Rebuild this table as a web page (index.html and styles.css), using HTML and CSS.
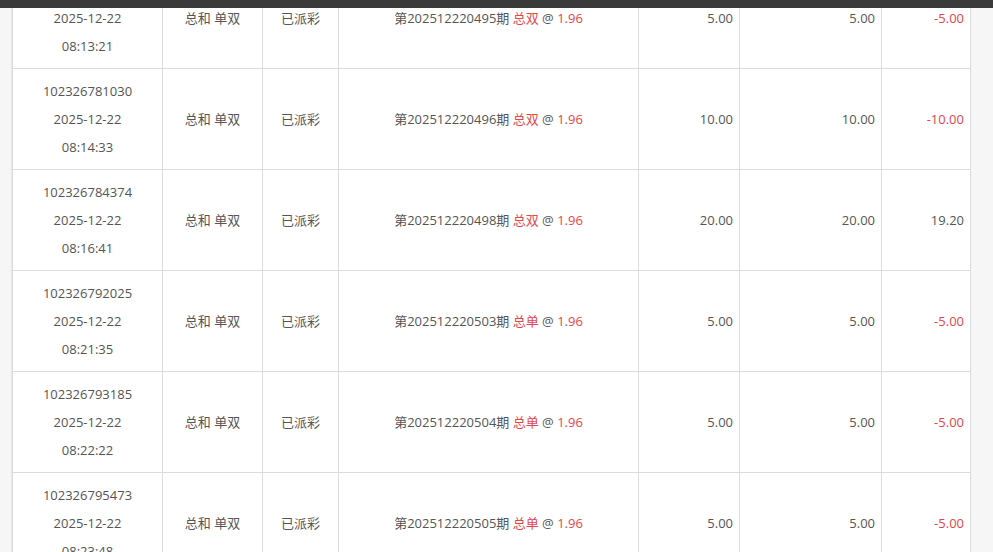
FILE: index.html
```html
<!DOCTYPE html>
<html lang="zh-CN">
<head>
<meta charset="utf-8">
<title>投注记录</title>
<link rel="stylesheet" href="styles.css">
</head>
<body>
<div class="topbar"></div>
<div class="page">
  <div class="panel">
    <table class="records">
      <colgroup>
        <col class="c-id"><col class="c-type"><col class="c-status"><col class="c-content"><col class="c-amt"><col class="c-valid"><col class="c-win">
      </colgroup>
      <tbody>
        <tr>
          <td class="center">102326779811<br>2025-12-22<br>08:13:21</td>
          <td class="center">总和 单双</td>
          <td class="center">已派彩</td>
          <td class="center">第202512220495期 <span class="red">总双</span> @ <span class="red">1.96</span></td>
          <td class="num">5.00</td>
          <td class="num">5.00</td>
          <td class="num red">-5.00</td>
        </tr>
        <tr>
          <td class="center">102326781030<br>2025-12-22<br>08:14:33</td>
          <td class="center">总和 单双</td>
          <td class="center">已派彩</td>
          <td class="center">第202512220496期 <span class="red">总双</span> @ <span class="red">1.96</span></td>
          <td class="num">10.00</td>
          <td class="num">10.00</td>
          <td class="num red">-10.00</td>
        </tr>
        <tr>
          <td class="center">102326784374<br>2025-12-22<br>08:16:41</td>
          <td class="center">总和 单双</td>
          <td class="center">已派彩</td>
          <td class="center">第202512220498期 <span class="red">总双</span> @ <span class="red">1.96</span></td>
          <td class="num">20.00</td>
          <td class="num">20.00</td>
          <td class="num">19.20</td>
        </tr>
        <tr>
          <td class="center">102326792025<br>2025-12-22<br>08:21:35</td>
          <td class="center">总和 单双</td>
          <td class="center">已派彩</td>
          <td class="center">第202512220503期 <span class="red">总单</span> @ <span class="red">1.96</span></td>
          <td class="num">5.00</td>
          <td class="num">5.00</td>
          <td class="num red">-5.00</td>
        </tr>
        <tr>
          <td class="center">102326793185<br>2025-12-22<br>08:22:22</td>
          <td class="center">总和 单双</td>
          <td class="center">已派彩</td>
          <td class="center">第202512220504期 <span class="red">总单</span> @ <span class="red">1.96</span></td>
          <td class="num">5.00</td>
          <td class="num">5.00</td>
          <td class="num red">-5.00</td>
        </tr>
        <tr>
          <td class="center">102326795473<br>2025-12-22<br>08:23:48</td>
          <td class="center">总和 单双</td>
          <td class="center">已派彩</td>
          <td class="center">第202512220505期 <span class="red">总单</span> @ <span class="red">1.96</span></td>
          <td class="num">5.00</td>
          <td class="num">5.00</td>
          <td class="num red">-5.00</td>
        </tr>
      </tbody>
    </table>
  </div>
</div>
</body>
</html>
```

FILE: styles.css
```css
html, body {
  margin: 0;
  padding: 0;
}
body {
  background: #f6f6f6;
  font-family: "Open Sans", "Noto Sans CJK SC", sans-serif;
  font-size: 13px;
  color: #555;
  overflow: hidden;
  height: 552px;
}
.topbar {
  position: fixed;
  top: 0;
  left: 0;
  right: 0;
  height: 8px;
  background: #3a3a3a;
  z-index: 2;
}
.page {
  padding-left: 11px;
}
.panel {
  width: 959px;
  border-left: 1px solid #e6e6e6;
  margin-top: -33px;
}
.records {
  border-collapse: collapse;
  table-layout: fixed;
  width: 958px;
  background: #fff;
}
.c-id { width: 150px; }
.c-type { width: 100px; }
.c-status { width: 76px; }
.c-content { width: 300px; }
.c-amt { width: 101px; }
.c-valid { width: 142px; }
.c-win { width: 89px; }
.records td {
  border: 1px solid #dcdcdc;
  padding: 8px 6px;
  line-height: 28px;
  vertical-align: middle;
  white-space: nowrap;
}
.records td.center {
  text-align: center;
}
.records td.num {
  text-align: right;
}
.red {
  color: #e4464b;
}
```
